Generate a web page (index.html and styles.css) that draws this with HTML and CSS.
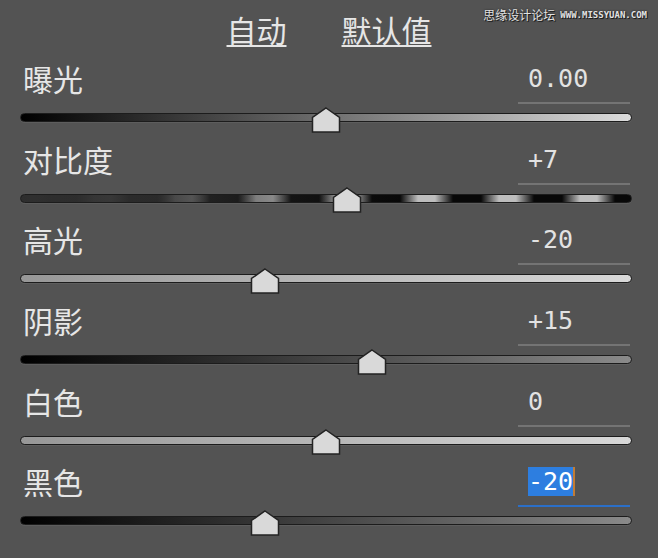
FILE: index.html
```html
<!DOCTYPE html>
<html lang="zh-CN">
<head>
    <meta charset="UTF-8">
    <meta name="viewport" content="width=device-width, initial-scale=1.0">
    <title>基本调整</title>
    <link rel="stylesheet" href="styles.css">
</head>
<body>
    <div class="panel">
        <div class="watermark">
            <span class="wm-cn">思缘设计论坛</span>
            <span class="wm-en">WWW.MISSYUAN.COM</span>
        </div>

        <div class="toolbar">
            <a class="tool-link">自动</a>
            <a class="tool-link">默认值</a>
        </div>

        <div class="adjust">
            <div class="adjust-head">
                <span class="adjust-label">曝光</span>
                <span class="adjust-value">0.00</span>
            </div>
            <div class="slider slider-exposure">
                <span class="slider-thumb" style="left: 50%"><svg width="30" height="26" viewBox="0 0 30 26"><path d="M15 1 L28.5 10.5 V25 H1.5 V10.5 Z"/></svg></span>
            </div>
        </div>

        <div class="adjust">
            <div class="adjust-head">
                <span class="adjust-label">对比度</span>
                <span class="adjust-value">+7</span>
            </div>
            <div class="slider slider-contrast">
                <span class="slider-thumb" style="left: 53.5%"><svg width="30" height="26" viewBox="0 0 30 26"><path d="M15 1 L28.5 10.5 V25 H1.5 V10.5 Z"/></svg></span>
            </div>
        </div>

        <div class="adjust">
            <div class="adjust-head">
                <span class="adjust-label">高光</span>
                <span class="adjust-value">-20</span>
            </div>
            <div class="slider slider-light">
                <span class="slider-thumb" style="left: 40%"><svg width="30" height="26" viewBox="0 0 30 26"><path d="M15 1 L28.5 10.5 V25 H1.5 V10.5 Z"/></svg></span>
            </div>
        </div>

        <div class="adjust">
            <div class="adjust-head">
                <span class="adjust-label">阴影</span>
                <span class="adjust-value">+15</span>
            </div>
            <div class="slider slider-dark">
                <span class="slider-thumb" style="left: 57.5%"><svg width="30" height="26" viewBox="0 0 30 26"><path d="M15 1 L28.5 10.5 V25 H1.5 V10.5 Z"/></svg></span>
            </div>
        </div>

        <div class="adjust">
            <div class="adjust-head">
                <span class="adjust-label">白色</span>
                <span class="adjust-value">0</span>
            </div>
            <div class="slider slider-light">
                <span class="slider-thumb" style="left: 50%"><svg width="30" height="26" viewBox="0 0 30 26"><path d="M15 1 L28.5 10.5 V25 H1.5 V10.5 Z"/></svg></span>
            </div>
        </div>

        <div class="adjust">
            <div class="adjust-head">
                <span class="adjust-label">黑色</span>
                <span class="adjust-value is-editing"><span class="value-selected">-20</span></span>
            </div>
            <div class="slider slider-dark">
                <span class="slider-thumb" style="left: 40%"><svg width="30" height="26" viewBox="0 0 30 26"><path d="M15 1 L28.5 10.5 V25 H1.5 V10.5 Z"/></svg></span>
            </div>
        </div>
    </div>
</body>
</html>
```

FILE: styles.css
```css
* {
    box-sizing: border-box;
}
body {
    margin: 0;
    background: #535353;
    font-family: "Noto Sans CJK SC", sans-serif;
    color: #e6e6e6;
}
.panel {
    position: relative;
    width: 658px;
    height: 558px;
}
.watermark {
    position: absolute;
    top: 7px;
    right: 11px;
    display: flex;
    align-items: center;
    gap: 5px;
    color: #e2e2e2;
    text-shadow: 0 0 2px #1e1e1e, 1px 1px 0 #1e1e1e;
}
.wm-cn {
    font-size: 12px;
    line-height: 16px;
}
.wm-en {
    font-family: "DejaVu Sans Mono", monospace;
    font-size: 9px;
    font-weight: bold;
    line-height: 16px;
}
.toolbar {
    height: 56px;
    display: flex;
    justify-content: center;
    gap: 55px;
    padding-top: 14px;
}
.tool-link {
    font-size: 30px;
    line-height: 30px;
    text-decoration: underline;
    text-decoration-thickness: 2px;
    text-underline-offset: 3px;
    cursor: pointer;
}
.adjust {
    height: 80.7px;
}
.adjust-head {
    height: 48px;
    display: flex;
    justify-content: space-between;
    align-items: flex-start;
    padding: 0 28px 0 23px;
}
.adjust-label {
    font-size: 30px;
    line-height: 30px;
    margin-top: 7px;
}
.adjust-value {
    align-self: flex-end;
    width: 112px;
    padding: 0 0 8px 10px;
    border-bottom: 2px solid #747474;
    font-family: "DejaVu Sans Mono", monospace;
    font-size: 25px;
    line-height: 30px;
    color: #e2e2e2;
}
.adjust-value.is-editing {
    border-bottom-color: #2b6fc8;
}
.value-selected {
    background: #2d7ee0;
    color: #fff;
    border-right: 2px solid #c27c34;
}
.slider {
    position: relative;
    height: 9px;
    margin: 9px 26px 0 20px;
    border: 1.5px solid #1c1c1c;
    border-radius: 5px;
    box-shadow: 0 1px 0 rgba(255, 255, 255, 0.06);
}
.slider-exposure {
    background: linear-gradient(to right, #000, #dcdcdc);
}
.slider-contrast {
    background:
        linear-gradient(to right, #2e2e2e 0%, rgba(46, 46, 46, 0.9) 22%, rgba(46, 46, 46, 0.35) 42%, rgba(46, 46, 46, 0) 62%),
        repeating-linear-gradient(to right, #bdbdbd 0, #bdbdbd 9px, #080808 27px, #080808 55px, #bdbdbd 73px, #bdbdbd 81px);
}
.slider-light {
    background: linear-gradient(to right, #979797, #d8d8d8);
}
.slider-dark {
    background: linear-gradient(to right, #000, #8a8a8a);
}
.slider-thumb {
    position: absolute;
    top: -7.5px;
    margin-left: -15px;
    width: 30px;
    height: 26px;
}
.slider-thumb svg {
    display: block;
}
.slider-thumb path {
    fill: #d9d9d9;
    stroke: #232323;
    stroke-width: 1.5;
}
```
